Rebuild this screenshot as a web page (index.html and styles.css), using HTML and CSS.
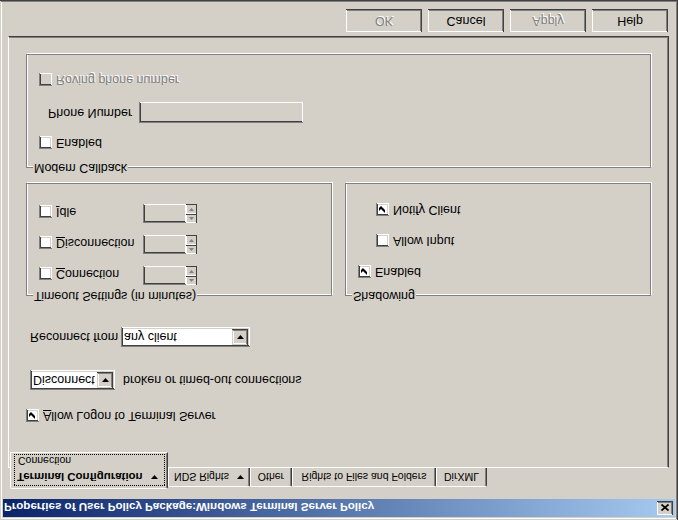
FILE: index.html
```html
<!DOCTYPE html>
<html lang="en">
<head>
<meta charset="utf-8">
<title>Properties of User Policy Package</title>
<link rel="stylesheet" href="styles.css">
</head>
<body>
<div class="window">
  <div class="titlebar">
    <span class="title">Properties of User Policy Package:Windows Terminal Server Policy</span>
    <span class="close"><svg width="8" height="7" viewBox="0 0 8 7"><path d="M0.5 0.5L7.5 6.5M7.5 0.5L0.5 6.5" stroke="#000" stroke-width="1.7" fill="none"/></svg></span>
  </div>
  <div class="tabs">
    <div class="tab tab-active">
      <div class="focus">
        <div class="tab-main"><span class="tab-bold">Terminal Configuration</span><svg class="arrow" width="7" height="4" viewBox="0 0 7 4"><path d="M0 0h7l-3.5 4z"/></svg></div>
        <div class="tab-sub">Connection</div>
      </div>
    </div>
    <div class="tab tab-nds">NDS Rights<svg class="arrow" width="7" height="4" viewBox="0 0 7 4"><path d="M0 0h7l-3.5 4z"/></svg></div>
    <div class="tab tab-other">Other</div>
    <div class="tab tab-rights">Rights to Files and Folders</div>
    <div class="tab tab-dirxml">DirXML</div>
  </div>
  <div class="panel">
    <div class="check row-logon">
      <span class="box"><svg class="tick" width="13" height="13" viewBox="0 0 13 13"><path d="M3 5L5 7L9 3V6L5 10L3 8Z"/></svg></span>
      <span><u>A</u>llow Logon to Terminal Server</span>
    </div>
    <div class="line row-disconnect">
      <div class="combo combo-disc">
        <span class="combo-text">Disconnect</span>
        <span class="dd"><svg width="7" height="4" viewBox="0 0 7 4"><path d="M0 0h7l-3.5 4z"/></svg></span>
      </div>
      <span>broken or timed-out connections</span>
    </div>
    <div class="line row-reconnect">
      <span class="reconnect-label">Reconnect from</span>
      <div class="combo combo-rec">
        <span class="combo-text">any client</span>
        <span class="dd"><svg width="7" height="4" viewBox="0 0 7 4"><path d="M0 0h7l-3.5 4z"/></svg></span>
      </div>
    </div>
    <div class="groups">
      <div class="group group-half group-timeout">
        <span class="group-label">Timeout Settings (in minutes)</span>
        <div class="trow">
          <div class="check tcheck"><span class="box"></span><span><u>C</u>onnection</span></div>
          <div class="spin"><span class="spin-field"></span><span class="spin-btns"><span class="spin-btn"><svg width="5" height="3" viewBox="0 0 5 3"><path d="M2.5 0L5 3H0z"/></svg></span><span class="spin-btn"><svg width="5" height="3" viewBox="0 0 5 3"><path d="M0 0h5L2.5 3z"/></svg></span></span></div>
        </div>
        <div class="trow">
          <div class="check tcheck"><span class="box"></span><span><u>D</u>isconnection</span></div>
          <div class="spin"><span class="spin-field"></span><span class="spin-btns"><span class="spin-btn"><svg width="5" height="3" viewBox="0 0 5 3"><path d="M2.5 0L5 3H0z"/></svg></span><span class="spin-btn"><svg width="5" height="3" viewBox="0 0 5 3"><path d="M0 0h5L2.5 3z"/></svg></span></span></div>
        </div>
        <div class="trow">
          <div class="check tcheck"><span class="box"></span><span><u>I</u>dle</span></div>
          <div class="spin"><span class="spin-field"></span><span class="spin-btns"><span class="spin-btn"><svg width="5" height="3" viewBox="0 0 5 3"><path d="M2.5 0L5 3H0z"/></svg></span><span class="spin-btn"><svg width="5" height="3" viewBox="0 0 5 3"><path d="M0 0h5L2.5 3z"/></svg></span></span></div>
        </div>
      </div>
      <div class="group group-half group-shadow">
        <span class="group-label">Shadowing</span>
        <div class="check">
          <span class="box"><svg class="tick" width="13" height="13" viewBox="0 0 13 13"><path d="M3 5L5 7L9 3V6L5 10L3 8Z"/></svg></span>
          <span>Enabled</span>
        </div>
        <div class="check indent">
          <span class="box"></span>
          <span>Allow Input</span>
        </div>
        <div class="check indent">
          <span class="box"><svg class="tick" width="13" height="13" viewBox="0 0 13 13"><path d="M3 5L5 7L9 3V6L5 10L3 8Z"/></svg></span>
          <span>Notify Client</span>
        </div>
      </div>
    </div>
    <div class="group group-modem">
      <span class="group-label">Modem Callback</span>
      <div class="check">
        <span class="box"></span>
        <span>Enabled</span>
      </div>
      <div class="line phone-row">
        <span class="phone-label">Phone Number</span>
        <span class="field"></span>
      </div>
      <div class="check">
        <span class="box box-disabled"></span>
        <span class="disabled-text">Roving phone number</span>
      </div>
    </div>
  </div>
  <div class="buttons">
    <div class="btn disabled-text">OK</div>
    <div class="btn">Cancel</div>
    <div class="btn disabled-text">Apply</div>
    <div class="btn">Help</div>
  </div>
</div>
</body>
</html>
```
FILE: styles.css
```css
* { box-sizing: border-box; }
html, body { margin: 0; padding: 0; }
body {
  width: 678px;
  height: 520px;
  overflow: hidden;
  background: #d4d0c8;
  font-family: "Liberation Sans", Arial, sans-serif;
  font-size: 12.5px;
  line-height: 15px;
  color: #000;
}
.window {
  width: 678px;
  height: 520px;
  padding: 3px;
  display: flex;
  flex-direction: column;
  background: #d4d0c8;
  transform: scaleY(-1);
  box-shadow: inset -1px -1px 0 #404040, inset 1px 1px 0 #d4d0c8,
              inset -2px -2px 0 #808080, inset 2px 2px 0 #fff;
}
.titlebar {
  height: 18px;
  display: flex;
  align-items: center;
  justify-content: space-between;
  padding: 0 2px 0 1px;
  background: linear-gradient(to right, #0a246a, #a6caf0);
  color: #fff;
}
.title {
  font-weight: bold;
  font-size: 11.6px;
}
.close {
  width: 16px;
  height: 14px;
  display: flex;
  align-items: center;
  justify-content: center;
  background: #d4d0c8;
  box-shadow: inset -1px -1px 0 #404040, inset 1px 1px 0 #fff,
              inset -2px -2px 0 #808080;
}
.tabs {
  display: flex;
  align-items: flex-start;
  height: 21px;
  margin: 10px 0 0 7px;
  position: relative;
  z-index: 1;
  font-size: 10.5px;
}
.tab {
  height: 19px;
  margin-top: 2px;
  display: flex;
  align-items: center;
  justify-content: center;
  background: #d4d0c8;
  border-top: 1px solid #fff;
  border-left: 1px solid #fff;
  border-right: 1px solid #404040;
  border-radius: 2px 2px 0 0;
  box-shadow: inset -1px 0 0 #808080;
}
.tab-active {
  width: 158px;
  height: 37px;
  margin-top: 0;
  display: block;
  padding: 2px 2px 2px 3px;
  border-bottom: 1px solid #fff;
}
.focus {
  height: 32px;
  border: 1px dotted #000;
  padding: 1px 0 0 2px;
}
.tab-main {
  display: flex;
  align-items: center;
  height: 14px;
}
.tab-bold {
  font-weight: bold;
  font-size: 11.5px;
}
.tab-main .arrow { margin-left: 8px; }
.tab-sub {
  height: 14px;
  line-height: 14px;
  margin-top: 2px;
  padding-left: 1px;
}
.tab-nds { width: 82px; }
.tab-nds .arrow { margin-left: 8px; }
.tab-other { width: 42px; }
.tab-rights { width: 144px; }
.tab-dirxml { width: 51px; }
.panel {
  margin-left: 5px;
  width: 661px;
  height: 432px;
  border-style: solid;
  border-width: 1px;
  border-color: #fff #404040 #404040 #fff;
  box-shadow: inset -1px -1px 0 #808080;
  padding: 0 17px;
  display: flex;
  flex-direction: column;
}
.check {
  display: flex;
  align-items: center;
  gap: 4px;
  height: 13px;
  white-space: nowrap;
}
.box {
  width: 13px;
  height: 13px;
  flex: none;
  background: #fff;
  box-shadow: inset 1px 1px 0 #808080, inset -1px -1px 0 #fff,
              inset 2px 2px 0 #404040, inset -2px -2px 0 #d4d0c8;
}
.box-disabled { background: #d4d0c8; }
.tick { display: block; fill: #000; }
.disabled-text {
  color: #808080;
  text-shadow: 1px 1px 0 #fff;
}
.row-logon { margin-top: 45px; }
.line {
  display: flex;
  align-items: center;
  white-space: nowrap;
}
.row-disconnect {
  margin: 19px 0 0 4px;
  height: 20px;
  gap: 8px;
}
.row-reconnect {
  margin: 23px 0 0 4px;
  height: 20px;
}
.reconnect-label { width: 91px; }
.combo {
  height: 20px;
  display: flex;
  align-items: center;
  padding: 2px;
  background: #fff;
  box-shadow: inset 1px 1px 0 #808080, inset -1px -1px 0 #fff,
              inset 2px 2px 0 #404040, inset -2px -2px 0 #d4d0c8;
}
.combo-disc { width: 85px; }
.combo-rec { width: 129px; }
.combo-text {
  flex: 1;
  padding-left: 1px;
}
.dd {
  width: 16px;
  height: 16px;
  display: flex;
  align-items: center;
  justify-content: center;
  background: #d4d0c8;
  box-shadow: inset -1px -1px 0 #404040, inset 1px 1px 0 #d4d0c8,
              inset -2px -2px 0 #808080, inset 2px 2px 0 #fff;
}
.groups {
  display: flex;
  gap: 13px;
  margin-top: 31px;
}
.group {
  position: relative;
  border: 1px solid #808080;
  box-shadow: inset 1px 1px 0 #fff, 1px 1px 0 #fff;
  padding: 0 12px;
  display: flex;
  flex-direction: column;
}
.group-label {
  position: absolute;
  top: -8px;
  left: 6px;
  padding: 0 1px;
  background: #d4d0c8;
  white-space: nowrap;
}
.group-half {
  width: 306px;
  height: 113px;
}
.group-timeout { padding-top: 9px; gap: 11px; }
.trow {
  display: flex;
  align-items: center;
  height: 20px;
}
.tcheck { width: 104px; margin-top: 4px; }
.spin {
  display: flex;
  width: 54px;
  height: 19px;
}
.spin-field {
  width: 43px;
  background: #d4d0c8;
  box-shadow: inset 1px 1px 0 #808080, inset -1px -1px 0 #fff,
              inset 2px 2px 0 #404040, inset -2px -2px 0 #d4d0c8;
}
.spin-btns {
  width: 11px;
  display: flex;
  flex-direction: column;
}
.spin-btn {
  flex: 1;
  display: flex;
  align-items: center;
  justify-content: center;
  background: #d4d0c8;
  box-shadow: inset -1px -1px 0 #404040, inset 1px 1px 0 #fff;
  fill: #808080;
}
.group-shadow { padding-top: 17px; gap: 18px; }
.indent { margin-left: 18px; }
.group-modem {
  margin-top: 15px;
  height: 114px;
  padding-top: 18px;
}
.phone-row {
  margin: 13px 0 0 9px;
  height: 21px;
}
.phone-label { width: 91px; }
.field {
  width: 164px;
  height: 21px;
  background: #d4d0c8;
  box-shadow: inset 1px 1px 0 #808080, inset -1px -1px 0 #fff,
              inset 2px 2px 0 #404040, inset -2px -2px 0 #d4d0c8;
}
.group-modem .phone-row + .check { margin-top: 16px; }
.buttons {
  display: flex;
  justify-content: flex-end;
  gap: 6px;
  margin-top: 4px;
  padding-right: 7px;
}
.btn {
  width: 76px;
  height: 23px;
  display: flex;
  align-items: center;
  justify-content: center;
  background: #d4d0c8;
  box-shadow: inset -1px -1px 0 #404040, inset 1px 1px 0 #fff,
              inset -2px -2px 0 #808080, inset 2px 2px 0 #d4d0c8;
}
```
